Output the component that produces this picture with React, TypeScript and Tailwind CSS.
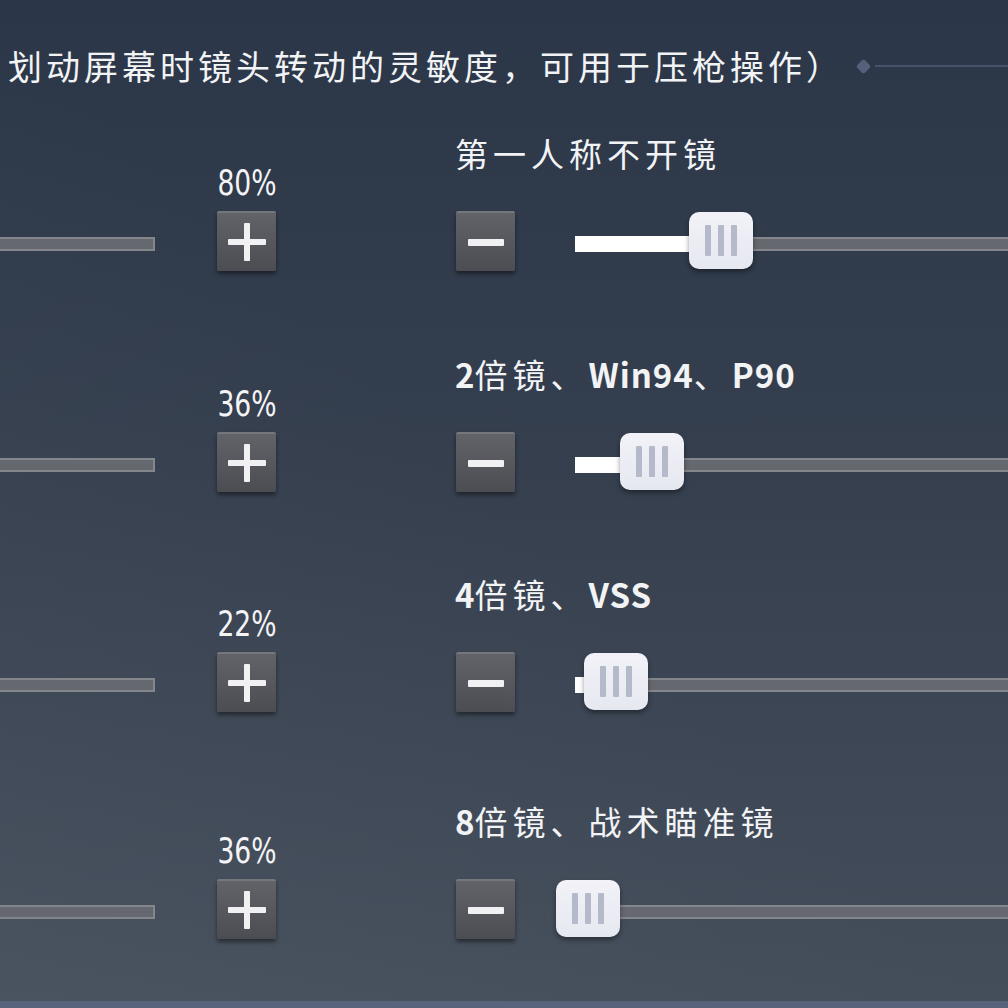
import React from "react";

type Row = {
  label: React.ReactNode;
  percent: string;
  thumbLeft: number;
  mt: string;
};

const CJK = "font-['Noto_Sans_CJK_SC','Noto_Sans',sans-serif]";

const rows: Row[] = [
  { label: "第一人称不开镜", percent: "80%", thumbLeft: 114, mt: "mt-[45px]" },
  {
    label: (
      <>
        <b className="font-bold tracking-normal">2</b>倍镜、<b className="font-bold tracking-[1px]">Win94</b>、<b className="font-bold tracking-[1px]">P90</b>
      </>
    ),
    percent: "36%",
    thumbLeft: 45,
    mt: "mt-[83px]",
  },
  {
    label: (
      <>
        <b className="font-bold tracking-normal">4</b>倍镜、<b className="font-bold tracking-[1px]">VSS</b>
      </>
    ),
    percent: "22%",
    thumbLeft: 9,
    mt: "mt-[82px]",
  },
  {
    label: (
      <>
        <b className="font-bold tracking-normal">8</b>倍镜、战术瞄准镜
      </>
    ),
    percent: "36%",
    thumbLeft: -19,
    mt: "mt-[89px]",
  },
];

function SquareButton({ kind }: { kind: "plus" | "minus" }) {
  return (
    <div className="relative w-[59px] h-[60px] rounded-[2px] border-t-2 border-[#74777c] bg-gradient-to-b from-[#616368] to-[#4b4d52] shadow-[0_3px_4px_rgba(0,0,0,0.45)] flex items-center justify-center">
      {kind === "plus" ? (
        <div className="relative w-[38px] h-[38px]">
          <div className="absolute left-0 right-0 top-[16px] h-[6px] bg-[#f1f1f3] rounded-[1px]" />
          <div className="absolute top-0 bottom-0 left-[16px] w-[6px] bg-[#f1f1f3] rounded-[1px]" />
        </div>
      ) : (
        <div className="w-[36px] h-[7px] bg-[#f1f1f3] rounded-[1px]" />
      )}
    </div>
  );
}

function Slider({ thumbLeft }: { thumbLeft: number }) {
  const fill = Math.max(0, thumbLeft + 12);
  return (
    <div className="relative flex-1 h-full">
      <div className="absolute left-0 right-0 top-[26px] h-[14px] bg-[#65686e] border-y-2 border-[#83868b]" />
      {fill > 0 && (
        <div
          className="absolute left-0 top-[25px] h-[16px] bg-white"
          style={{ width: fill }}
        />
      )}
      <div
        className="absolute top-[1px] w-[64px] h-[57px] rounded-[10px] bg-gradient-to-b from-[#f2f2f8] to-[#e6e8f0] shadow-[0_3px_5px_rgba(0,0,0,0.4)] flex items-center justify-center gap-[7px]"
        style={{ left: thumbLeft }}
      >
        <div className="w-[6px] h-[31px] bg-[#b5bacb] rounded-[1px]" />
        <div className="w-[6px] h-[31px] bg-[#b5bacb] rounded-[1px]" />
        <div className="w-[6px] h-[31px] bg-[#b5bacb] rounded-[1px]" />
      </div>
    </div>
  );
}

export default function App() {
  return (
    <div className="w-[1008px] h-[1008px] overflow-hidden relative bg-gradient-to-b from-[#2b3648] via-[#36404f] to-[#444e5b] text-white">
      <div className="absolute inset-0 bg-gradient-to-tr from-[rgba(120,120,130,0.12)] via-transparent to-transparent" />
      <div className="relative flex flex-col">
        <div className="mt-[44px] h-[44px] flex items-center">
          <div className={`${CJK} ml-[8px] text-[34px] leading-[44px] tracking-[4px] text-[#f2f3f5] whitespace-nowrap`}>
            划动屏幕时镜头转动的灵敏度，可用于压枪操作）
          </div>
          <div className="ml-[14px] w-[11px] h-[11px] rotate-45 rounded-[3px] bg-[#55607a]" />
          <div className="ml-[6px] flex-1 h-[2px] bg-[#46526a]" />
        </div>

        {rows.map((row, i) => (
          <div key={i} className={`${row.mt} flex items-end h-[138px]`}>
            <div className="shrink-0 w-[155px] h-[14px] mb-[20px] bg-[#65686e] border-y-2 border-r-2 border-[#83868b]" />
            <div className="shrink-0 ml-[62px] w-[59px] flex flex-col">
              <div className="h-[30px] mb-[13px] flex justify-center">
                <div className="scale-x-[0.74] font-['DejaVu_Sans',sans-serif] text-[36px] leading-[30px] text-[#f4f4f6] whitespace-nowrap">
                  {row.percent}
                </div>
              </div>
              <SquareButton kind="plus" />
            </div>
            <div className="ml-[179px] flex-1 flex flex-col">
              <div className={`${CJK} h-[40px] mb-[38px] text-[33px] leading-[40px] tracking-[5px] text-[#f2f3f5] whitespace-nowrap`}>
                {row.label}
              </div>
              <div className="flex items-center h-[60px]">
                <div className="ml-[1px]">
                  <SquareButton kind="minus" />
                </div>
                <div className="ml-[60px] flex-1 h-full flex">
                  <Slider thumbLeft={row.thumbLeft} />
                </div>
              </div>
            </div>
          </div>
        ))}
      </div>
      <div className="absolute left-0 right-0 bottom-0 h-[7px] bg-[#57637a]" />
    </div>
  );
}
